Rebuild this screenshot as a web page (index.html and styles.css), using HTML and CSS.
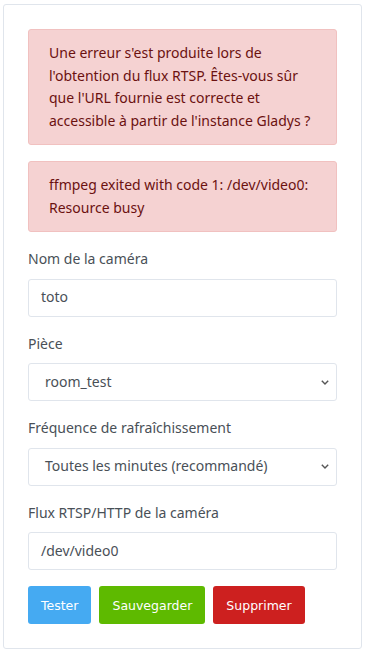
FILE: index.html
```html
<!DOCTYPE html>
<html lang="fr">
<head>
<meta charset="utf-8">
<link rel="stylesheet" href="styles.css">
</head>
<body>
<div class="card">
  <div class="alert">Une erreur s'est produite lors de l'obtention du flux RTSP. Êtes-vous sûr que l'URL fournie est correcte et accessible à partir de l'instance Gladys ?</div>
  <div class="alert">ffmpeg exited with code 1: /dev/video0: Resource busy</div>
  <div class="group">
    <label class="label">Nom de la caméra</label>
    <div class="input">toto</div>
  </div>
  <div class="group">
    <label class="label">Pièce</label>
    <div class="input select"><span>room_test</span><svg class="chev" width="8" height="5" viewBox="0 0 8 5"><path d="M0.8 0.8 L4 4 L7.2 0.8" fill="none" stroke="#555" stroke-width="1.4"/></svg></div>
  </div>
  <div class="group">
    <label class="label">Fréquence de rafraîchissement</label>
    <div class="input select"><span>Toutes les minutes (recommandé)</span><svg class="chev" width="8" height="5" viewBox="0 0 8 5"><path d="M0.8 0.8 L4 4 L7.2 0.8" fill="none" stroke="#555" stroke-width="1.4"/></svg></div>
  </div>
  <div class="group">
    <label class="label">Flux RTSP/HTTP de la caméra</label>
    <div class="input">/dev/video0</div>
  </div>
  <div class="buttons">
    <button class="btn btn-blue">Tester</button>
    <button class="btn btn-green">Sauvegarder</button>
    <button class="btn btn-red">Supprimer</button>
  </div>
</div>
</body>
</html>
```
FILE: styles.css
```css
* { box-sizing: border-box; }
html, body { margin: 0; padding: 0; background: #fff; }
body {
  padding: 4px 4px 0 3px;
  font-family: "Noto Sans", sans-serif;
  font-size: 14px;
  line-height: 22.5px;
  color: #495057;
}
.card {
  width: 359px;
  height: 645px;
  border: 1px solid #e0e5ec;
  border-radius: 3px;
  padding: 24px;
}
.alert {
  background: #f5d2d2;
  border: 1px solid #f1c1c0;
  color: #6b1110;
  border-radius: 3px;
  padding: 12px 20px;
  margin-bottom: 16px;
}
.group { margin-bottom: 16px; }
.label { display: block; margin-bottom: 8px; }
.input {
  height: 38px;
  border: 1px solid #e0e5ec;
  border-radius: 3px;
  padding: 0 12px;
  display: flex;
  align-items: center;
  color: #495057;
}
.select { padding-left: 16px; padding-right: 7px; justify-content: space-between; }
.chev { flex: none; }
.buttons { display: flex; gap: 8px; }
.btn {
  height: 38px;
  border: 0;
  border-radius: 3px;
  padding: 0 13px;
  color: #fff;
  font-family: "DejaVu Sans", sans-serif;
  font-size: 12.5px;
}
.btn-blue { background: #45aaf2; }
.btn-green { background: #5eba00; }
.btn-red { background: #cd201f; }
```
